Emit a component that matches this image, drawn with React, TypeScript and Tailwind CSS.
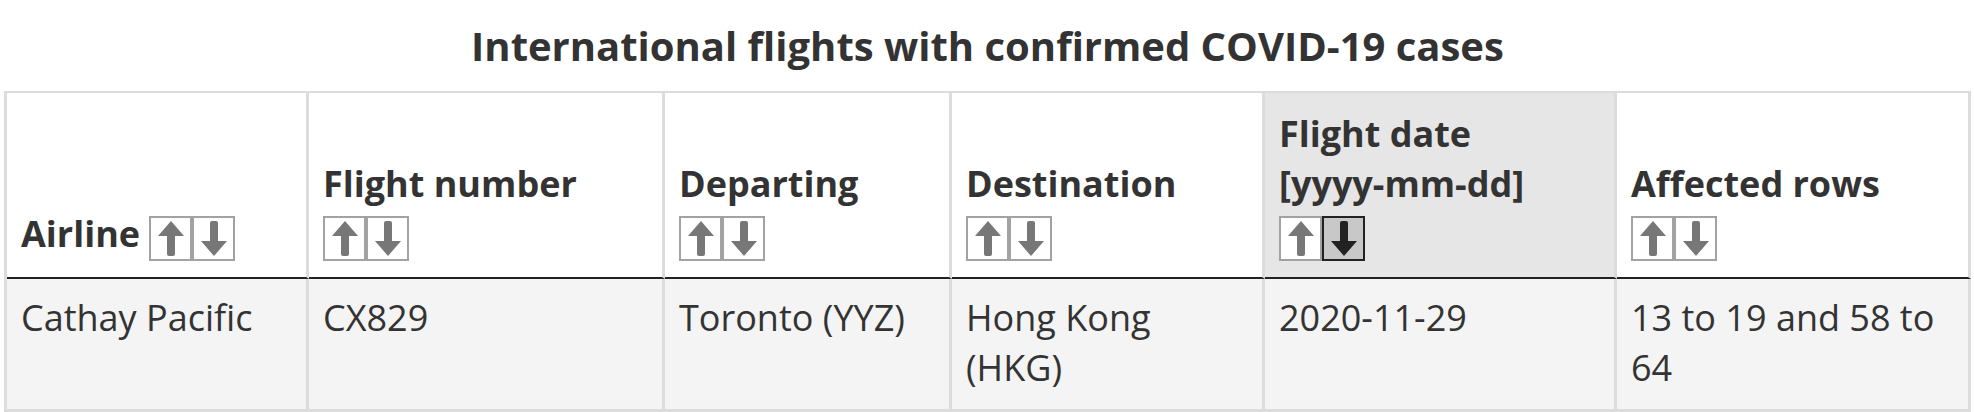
import React from "react";

type Col = { label: React.ReactNode; width: string; sorted?: "asc" | "desc" };

const columns: Col[] = [
  { label: "Airline", width: "w-[302px]" },
  { label: "Flight number", width: "w-[356px]" },
  { label: "Departing", width: "w-[287px]" },
  { label: "Destination", width: "w-[313px]" },
  {
    label: (
      <>
        Flight date
        <br />
        [yyyy-mm-dd]
      </>
    ),
    width: "w-[352px]",
    sorted: "desc",
  },
  { label: "Affected rows", width: "" },
];

const row = [
  "Cathay Pacific",
  "CX829",
  "Toronto (YYZ)",
  "Hong Kong (HKG)",
  "2020-11-29",
  "13 to 19 and 58 to 64",
];

function Arrow({ dir, color }: { dir: "up" | "down"; color: string }) {
  // arrow drawn pointing up, flipped for down
  return (
    <svg
      width="28"
      height="37"
      viewBox="0 0 28 37"
      className={dir === "down" ? "rotate-180" : ""}
    >
      <path d="M14 1 L27 16 L18 16 L18 34 Q18 36 16 36 L12 36 Q10 36 10 34 L10 16 L1 16 Z" fill={color} />
    </svg>
  );
}

function SortButtons({ sorted }: { sorted?: "asc" | "desc" }) {
  const box = "flex h-[45px] w-[43px] items-center justify-center border-2";
  return (
    <span className="inline-flex align-[-10px]">
      <span
        className={`${box} ${
          sorted === "asc" ? "border-[#222] bg-[#c8c8c8]" : "border-[#a2a2a2] bg-white"
        }`}
      >
        <Arrow dir="up" color={sorted === "asc" ? "#222" : "#777"} />
      </span>
      <span
        className={`${box} ${
          sorted === "desc" ? "border-[#222] bg-[#c8c8c8]" : "border-[#a2a2a2] bg-white"
        }`}
      >
        <Arrow dir="down" color={sorted === "desc" ? "#222" : "#777"} />
      </span>
    </span>
  );
}

export default function App() {
  return (
    <div className="bg-white pl-[4px] pr-[3px] font-['Open_Sans',sans-serif] text-[36px] leading-[50px] text-[#333]">
      <table className="w-full table-fixed border-separate border-spacing-0 border-l-[3px] border-t-[2px] border-[#dcdcdc]">
        <caption className="pt-[21px] pb-[20px] text-center text-[40px] font-bold">
          International flights with confirmed COVID-19 cases
        </caption>
        <colgroup>
          {columns.map((c, i) => (
            <col key={i} className={c.width} />
          ))}
        </colgroup>
        <thead>
          <tr>
            {columns.map((c, i) => (
              <th
                key={i}
                className={`border-r-[3px] border-b-2 border-r-[#dcdcdc] border-b-[#222] px-[14px] pt-[16px] pb-[16px] text-left align-bottom font-bold ${
                  c.sorted ? "bg-[#e6e6e6]" : "bg-white"
                }`}
              >
                {c.label} <SortButtons sorted={c.sorted} />
              </th>
            ))}
          </tr>
        </thead>
        <tbody>
          <tr>
            {row.map((v, i) => (
              <td
                key={i}
                className="border-r-[3px] border-b-[3px] border-[#dcdcdc] bg-[#f4f4f4] px-[14px] pt-[14px] pb-[16px] align-top"
              >
                {v}
              </td>
            ))}
          </tr>
        </tbody>
      </table>
    </div>
  );
}
